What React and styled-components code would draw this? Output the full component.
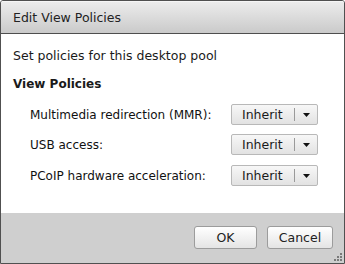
import React from "react";
import styled, { createGlobalStyle } from "styled-components";

const GlobalStyle = createGlobalStyle`
  html, body {
    margin: 0;
    padding: 0;
    background: #ffffff;
  }
  body {
    font-family: "DejaVu Sans", Tahoma, sans-serif;
    font-size: 12px;
    color: #1a1a1a;
  }
`;

const Dialog = styled.div`
  box-sizing: border-box;
  width: 345px;
  height: 264px;
  border: 1px solid #505050;
  border-radius: 3px 3px 0 0;
  display: flex;
  flex-direction: column;
  background: #ffffff;
  overflow: hidden;
`;

const TitleBar = styled.div`
  box-sizing: border-box;
  height: 33px;
  padding: 0 12px;
  display: flex;
  align-items: center;
  font-size: 12.5px;
  color: #222;
  background: linear-gradient(#ececec, #cacaca);
  border-top: 1px solid #f6f6f6;
  border-bottom: 1px solid #4e4e4e;
`;

const Body = styled.div`
  flex: 1;
  padding: 14px 12px 0 12px;
`;

const Intro = styled.div`
  line-height: 16px;
  font-size: 12.5px;
`;

const Heading = styled.div`
  margin-top: 12px;
  line-height: 16px;
  font-weight: bold;
`;

const Grid = styled.div`
  display: grid;
  grid-template-columns: 201px 87px;
  row-gap: 9px;
  margin-top: 12px;
  padding-left: 17px;
  align-items: center;
`;

const Label = styled.div`
  line-height: 16px;
  color: #111;
  margin-top: ${(p) => (p.$nudge ? "1px" : "0")};
`;

const Select = styled.div`
  box-sizing: border-box;
  height: 21px;
  display: flex;
  align-items: center;
  border: 1px solid #b8b8b8;
  border-radius: 2px;
  background: linear-gradient(#f7f7f7, #e2e2e2);
  margin-top: ${(p) => (p.$nudge ? "1px" : "0")};
`;

const SelectValue = styled.span`
  flex: 1;
  padding-left: 10px;
  font-size: 12.5px;
`;

const SelectArrow = styled.span`
  width: 22px;
  height: 13px;
  border-left: 1px solid #9a9a9a;
  display: flex;
  align-items: center;
  justify-content: center;
`;

const Footer = styled.div`
  height: 50px;
  background: #cfcfcf;
  display: flex;
  justify-content: flex-end;
  align-items: flex-start;
  gap: 10px;
  padding: 13px 11px 0 0;
  box-sizing: border-box;
  position: relative;
`;

const Button = styled.button`
  box-sizing: border-box;
  width: ${(p) => p.$w}px;
  height: 23px;
  border: 1px solid #9c9c9c;
  border-radius: 3px;
  background: linear-gradient(#ffffff, #e4e4e4);
  font-family: "DejaVu Sans", Tahoma, sans-serif;
  font-size: 12.5px;
  color: #222;
  padding: 0;
`;

const Grip = styled.svg`
  position: absolute;
  right: 1px;
  bottom: 1px;
`;

const Arrow = () => (
  <svg width="7" height="4" viewBox="0 0 7 4">
    <path d="M0 0h7L3.5 4z" fill="#111" />
  </svg>
);

const rows = [
  "Multimedia redirection (MMR):",
  "USB access:",
  "PCoIP hardware acceleration:",
];

export default function App() {
  return (
    <>
      <GlobalStyle />
      <Dialog>
        <TitleBar>Edit View Policies</TitleBar>
        <Body>
          <Intro>Set policies for this desktop pool</Intro>
          <Heading>View Policies</Heading>
          <Grid>
            {rows.map((r, i) => (
              <React.Fragment key={r}>
                <Label $nudge={i === 2}>{r}</Label>
                <Select $nudge={i === 2}>
                  <SelectValue>Inherit</SelectValue>
                  <SelectArrow>
                    <Arrow />
                  </SelectArrow>
                </Select>
              </React.Fragment>
            ))}
          </Grid>
        </Body>
        <Footer>
          <Button $w={63}>OK</Button>
          <Button $w={66}>Cancel</Button>
          <Grip width="9" height="9" viewBox="0 0 9 9">
            <g fill="#7a7a7a">
              <rect x="6" y="0" width="2" height="2" />
              <rect x="3" y="3" width="2" height="2" />
              <rect x="6" y="3" width="2" height="2" />
              <rect x="0" y="6" width="2" height="2" />
              <rect x="3" y="6" width="2" height="2" />
              <rect x="6" y="6" width="2" height="2" />
            </g>
          </Grip>
        </Footer>
      </Dialog>
    </>
  );
}
